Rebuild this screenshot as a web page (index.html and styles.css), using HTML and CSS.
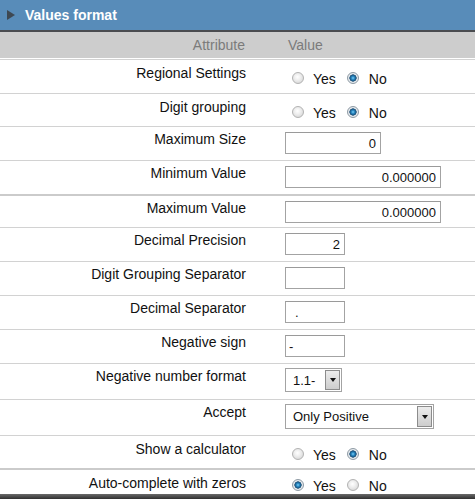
FILE: index.html
```html
<!DOCTYPE html>
<html>
<head>
<meta charset="utf-8">
<link rel="stylesheet" href="styles.css">
</head>
<body>
<div class="panel">
  <div class="titlebar"><span class="tri"></span><span class="title">Values format</span></div>
  <div class="colhead"><div class="c1">Attribute</div><div class="c2">Value</div></div>

  <div class="row h33 rad">
    <div class="label">Regional Settings</div>
    <div class="value radios">
      <input type="radio" name="r1" class="rb"><span class="opt">Yes</span>
      <input type="radio" name="r1" class="rb rb2" checked><span>No</span>
    </div>
  </div>
  <div class="row h32 rad">
    <div class="label">Digit grouping</div>
    <div class="value radios">
      <input type="radio" name="r2" class="rb"><span class="opt">Yes</span>
      <input type="radio" name="r2" class="rb rb2" checked><span>No</span>
    </div>
  </div>
  <div class="row h33">
    <div class="label">Maximum Size</div>
    <div class="value"><input class="txt w96 num" type="text" value="0"></div>
  </div>
  <div class="row h33">
    <div class="label">Minimum Value</div>
    <div class="value"><input class="txt w156 num" type="text" value="0.000000"></div>
  </div>
  <div class="row h31 thick">
    <div class="label">Maximum Value</div>
    <div class="value"><input class="txt w156 num" type="text" value="0.000000"></div>
  </div>
  <div class="row h33">
    <div class="label">Decimal Precision</div>
    <div class="value"><input class="txt w60 num" type="text" value="2"></div>
  </div>
  <div class="row h33">
    <div class="label">Digit Grouping Separator</div>
    <div class="value"><input class="txt w60" type="text" value=""></div>
  </div>
  <div class="row h33">
    <div class="label">Decimal Separator</div>
    <div class="value"><input class="txt w60 dot" type="text" value="."></div>
  </div>
  <div class="row h33">
    <div class="label">Negative sign</div>
    <div class="value"><input class="txt w60" type="text" value="-"></div>
  </div>
  <div class="row h35">
    <div class="label">Negative number format</div>
    <div class="value">
      <div class="sel w57"><span class="seltext">1.1-</span><span class="arrow"><span class="caret"></span></span></div>
    </div>
  </div>
  <div class="row h35">
    <div class="label">Accept</div>
    <div class="value">
      <div class="sel w149 tall"><span class="seltext">Only Positive</span><span class="arrow"><span class="caret"></span></span></div>
    </div>
  </div>
  <div class="row h32 rad">
    <div class="label">Show a calculator</div>
    <div class="value radios">
      <input type="radio" name="r3" class="rb"><span class="opt">Yes</span>
      <input type="radio" name="r3" class="rb rb2" checked><span>No</span>
    </div>
  </div>
  <div class="row h24 thick rad last">
    <div class="label">Auto-complete with zeros</div>
    <div class="value radios">
      <input type="radio" name="r4" class="rb" checked><span class="opt">Yes</span>
      <input type="radio" name="r4" class="rb rb2"><span>No</span>
    </div>
  </div>
  <div class="bottombar"></div>
</div>
</body>
</html>
```

FILE: styles.css
```css
html, body {
  margin: 0;
  padding: 0;
  background: #fff;
}
body {
  font-family: "Liberation Sans", Arial, sans-serif;
  font-size: 14px;
  color: #111;
}
.panel {
  width: 475px;
  height: 499px;
  overflow: hidden;
}
.titlebar {
  height: 30px;
  background: #588cb9;
  border-bottom: 2px solid #4a4c50;
  display: flex;
  align-items: center;
  padding-left: 7px;
}
.tri {
  width: 0;
  height: 0;
  border-top: 5px solid transparent;
  border-bottom: 5px solid transparent;
  border-left: 8px solid #3e4852;
  margin-right: 10px;
}
.title {
  color: #fff;
  font-weight: bold;
  font-size: 14px;
}
.colhead {
  height: 26px;
  background: #cdcdcd;
  display: grid;
  grid-template-columns: 270px 1fr;
  align-items: center;
  color: #7b7b7b;
  margin-bottom: 1px;
}
.c1 {
  text-align: right;
  padding-right: 25px;
}
.c2 {
  padding-left: 18px;
}
.row {
  display: grid;
  grid-template-columns: 270px 1fr;
  align-items: start;
  border-top: 1px solid #d2d2d2;
  overflow: hidden;
}
.row.thick {
  border-top: 2px solid #cbcbcb;
}
.h24 { height: 24px; }
.h31 { height: 31px; }
.h32 { height: 32px; }
.h33 { height: 33px; }
.h35 { height: 35px; }
.label {
  text-align: right;
  padding-right: 24px;
  padding-top: 4px;
  line-height: 16px;
  color: #111;
}
.rad .label {
  padding-top: 5px;
}
.last .label {
  padding-top: 5px;
}
.value {
  padding-left: 15px;
}
.radios {
  display: flex;
  align-items: center;
  height: 16px;
  line-height: 16px;
  padding-top: 11px;
}
.last .radios {
  padding-top: 8px;
}
.rb {
  appearance: none;
  -webkit-appearance: none;
  width: 12px;
  height: 12px;
  border-radius: 50%;
  border: 1px solid #b2b2b2;
  box-sizing: border-box;
  background: radial-gradient(circle at 45% 40%, #ffffff 0, #f0f0f0 35%, #cfcfcf 100%);
  margin: 0 9px 3px 7px;
  flex: none;
}
.rb2 {
  margin-left: 11px;
  margin-right: 10px;
}
.rb:checked {
  border-color: #8e9aa4;
  background: radial-gradient(circle at 50% 50%, #7fd0f5 0, #2c8cc6 1.5px, #1a5d8c 2.8px, #2d587a 3.4px, #e9eef2 3.9px, #d6d9dc 100%);
}
.txt {
  display: block;
  box-sizing: border-box;
  height: 22px;
  margin: 5px 0 0 0;
  border: 1px solid #a3a3a3;
  border-top-color: #9a9a9a;
  padding: 0 4px 0 3px;
  font-family: "Liberation Sans", Arial, sans-serif;
  font-size: 13px;
  color: #111;
  background: #fff;
  outline: none;
}
.num {
  text-align: right;
}
.dot {
  padding-left: 9px;
}
.w60 { width: 60px; }
.w96 { width: 96px; }
.w156 { width: 156px; }
.sel {
  box-sizing: border-box;
  height: 24px;
  margin-top: 4px;
  border: 1px solid #a3a3a3;
  display: flex;
  align-items: stretch;
  font-size: 13px;
  color: #111;
  background: #fff;
}
.sel.tall {
  height: 25px;
}
.w57 { width: 57px; }
.w149 { width: 149px; }
.seltext {
  flex: 1;
  padding-left: 7px;
  display: flex;
  align-items: center;
  white-space: nowrap;
  overflow: hidden;
}
.arrow {
  width: 15px;
  margin: 1px;
  border: 1px solid #8c8c8c;
  box-sizing: border-box;
  background: linear-gradient(to bottom, #ececec, #cdcdcd);
  display: flex;
  align-items: center;
  justify-content: center;
}
.caret {
  width: 0;
  height: 0;
  border-left: 3.5px solid transparent;
  border-right: 3.5px solid transparent;
  border-top: 4px solid #111;
}
.bottombar {
  height: 5px;
  background: linear-gradient(to bottom, #6a6a6a, #303030);
}
```
